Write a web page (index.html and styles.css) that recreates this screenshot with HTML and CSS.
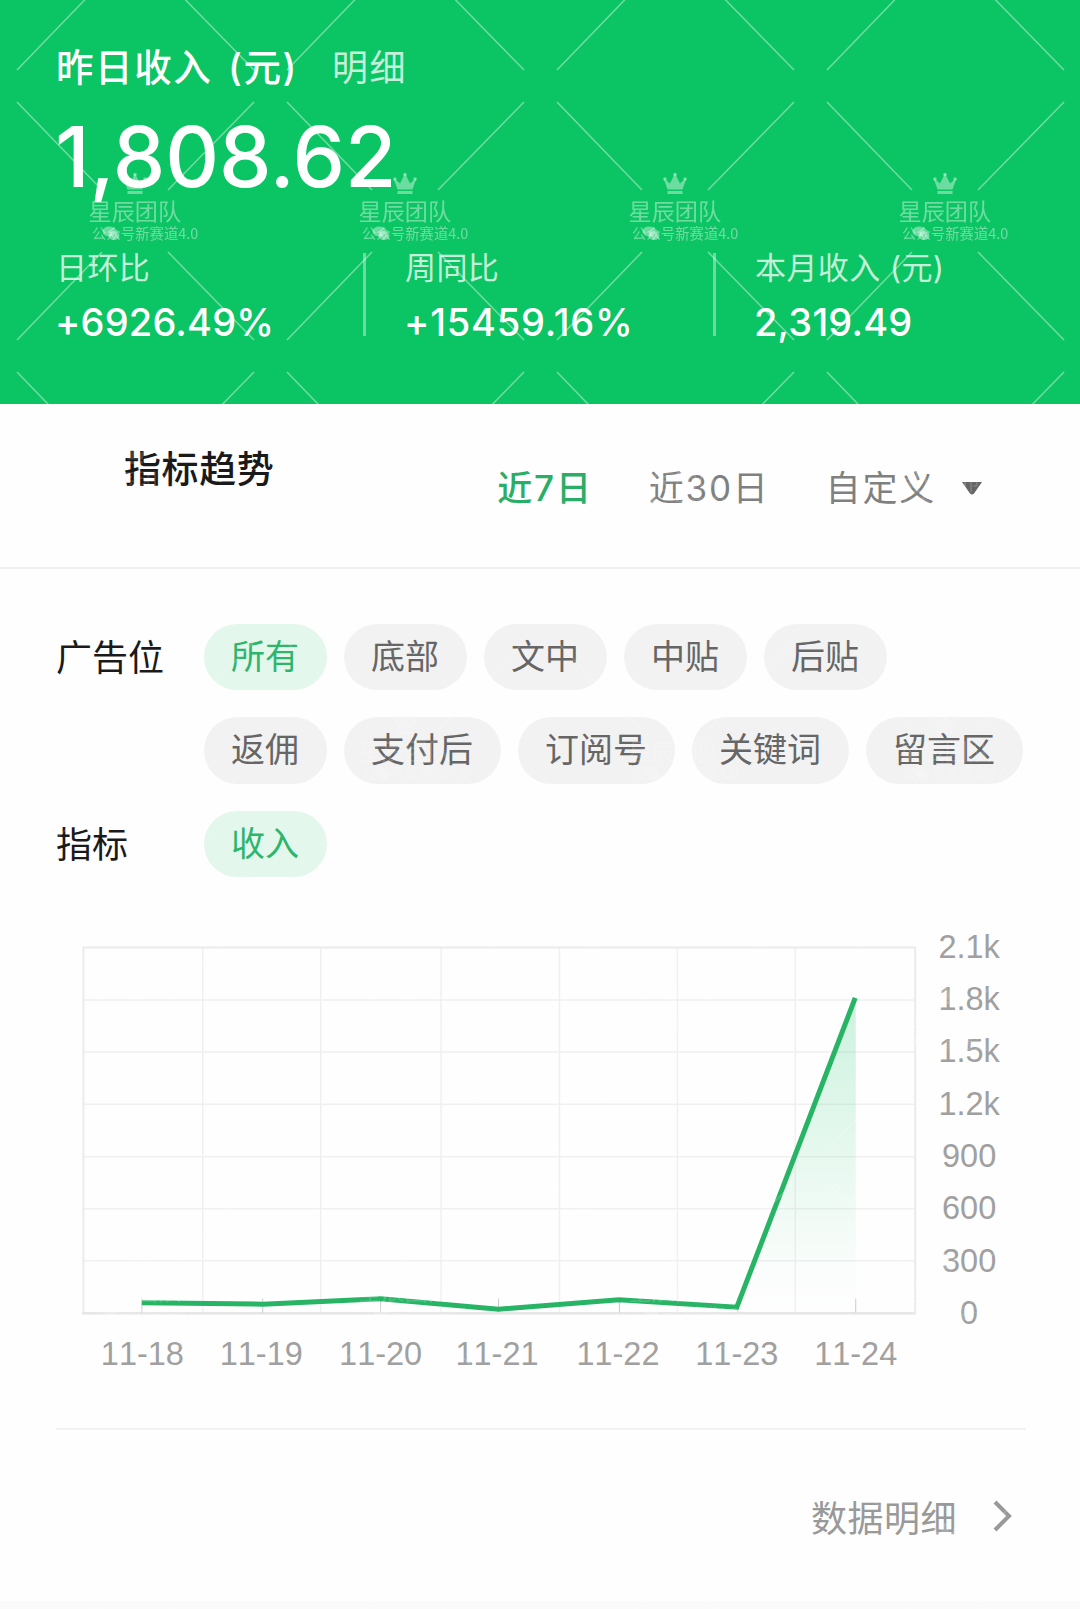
FILE: index.html
```html
<!DOCTYPE html>
<html lang="zh-CN">
<head>
    <meta charset="UTF-8">
    <meta name="viewport" content="width=device-width, initial-scale=1.0">
    <title>指标趋势</title>
    <link rel="stylesheet" href="styles.css">
</head>
<body>
    <div class="page">
        <div class="income">
            <div class="income-title">
                <h1>昨日收入 (元)</h1>
                <a class="income-link">明细</a>
            </div>
            <div class="income-total">1,808.62</div>
            <div class="stats">
                <div class="stat stat-day">
                    <div class="stat-label">日环比</div>
                    <div class="stat-value">+6926.49%</div>
                </div>
                <div class="stat stat-week">
                    <div class="stat-label">周同比</div>
                    <div class="stat-value">+15459.16%</div>
                </div>
                <div class="stat stat-month">
                    <div class="stat-label">本月收入 (元)</div>
                    <div class="stat-value">2,319.49</div>
                </div>
            </div>
        </div>

        <div class="trend-head">
            <h2>指标趋势</h2>
            <div class="tabs">
                <span class="tab active">近7日</span>
                <span class="tab">近30日</span>
                <span class="tab">自定义</span>
                <svg class="caret" width="20" height="13" viewBox="0 0 20 13"><path d="M0 0h20l-8 11.500q-2 2-4 0z" fill="#666"/></svg>
            </div>
        </div>

        <div class="filters">
            <div class="filter">
                <div class="filter-name">广告位</div>
                <div class="chips">
                    <span class="chip active">所有</span>
                    <span class="chip">底部</span>
                    <span class="chip">文中</span>
                    <span class="chip">中贴</span>
                    <span class="chip">后贴</span>
                    <span class="chip">返佣</span>
                    <span class="chip">支付后</span>
                    <span class="chip">订阅号</span>
                    <span class="chip">关键词</span>
                    <span class="chip">留言区</span>
                </div>
            </div>
            <div class="filter">
                <div class="filter-name">指标</div>
                <div class="chips">
                    <span class="chip active">收入</span>
                </div>
            </div>
        </div>

        <svg class="chart" width="1080" height="460" viewBox="0 920 1080 460">
            <defs>
                <linearGradient id="area" x1="0" y1="997" x2="0" y2="1312" gradientUnits="userSpaceOnUse">
                    <stop offset="0" stop-color="#07c160" stop-opacity="0.2"/>
                    <stop offset="0.85" stop-color="#07c160" stop-opacity="0.02"/>
                    <stop offset="1" stop-color="#07c160" stop-opacity="0"/>
                </linearGradient>
            </defs>
            <path class="grid" d="M83 999H915M83 1051H915M83 1103.500H915M83 1156H915M83 1208H915M83 1260H915M202.500 947V1312M320.500 947V1312M441 947V1312M559.500 947V1312M677.500 947V1312M795.500 947V1312"/>
            <rect class="frame" x="83" y="946.500" width="832.500" height="366"/>
            <path class="axis" d="M82 1312.500H916.500"/>
            <path class="tick" d="M141.500 1298V1312M262.500 1298V1312M380.500 1298V1312M498.500 1298V1312M619.500 1298V1312M738 1298V1312M856 1298V1312"/>
            <path d="M738 1306L856 997V1312H738z" fill="url(#area)"/>
            <polyline class="line" points="141.500,1302 262.500,1303.500 380.500,1298 498.500,1308.500 619,1299 737,1306.500 855.500,997"/>
            <g class="labels">
                <text x="969.500" y="957">2.1k</text>
                <text x="969.500" y="1009">1.8k</text>
                <text x="969.500" y="1061.500">1.5k</text>
                <text x="969.500" y="1114">1.2k</text>
                <text x="969.500" y="1166">900</text>
                <text x="969.500" y="1218.500">600</text>
                <text x="969.500" y="1271">300</text>
                <text x="969.500" y="1323">0</text>
                <text x="142" y="1364">11-18</text>
                <text x="261" y="1364">11-19</text>
                <text x="380.500" y="1364">11-20</text>
                <text x="497" y="1364">11-21</text>
                <text x="618" y="1364">11-22</text>
                <text x="737" y="1364">11-23</text>
                <text x="856" y="1364">11-24</text>
            </g>
        </svg>

        <div class="more">
            <span>数据明细</span>
            <svg width="19" height="32" viewBox="0 0 19 32"><path d="M2 2l14 14L2 30" fill="none" stroke="#999" stroke-width="4"/></svg>
        </div>
        <div class="page-end"></div>

        <!-- watermark, repeats every 270px, fainter below the green header -->
        <svg class="watermark" width="1080" height="1609">
            <defs>
                <pattern id="mark" y="87" width="270" height="270" patternUnits="userSpaceOnUse">
                    <path d="M17 15L102 103M254 15L168 103M102 165L17 253M168 165L254 253" stroke="#fff" stroke-opacity="0.4" stroke-width="1.600"/>
                    <g class="mark-icon">
                        <path d="M127.500 102.500l-4-11.500 6.500 5.500 5-10 5 10 6.500-5.500-4 11.500zM127.500 104h15v3h-15z"/>
                        <circle cx="135" cy="87.500" r="1.800"/>
                        <circle cx="125" cy="92" r="1.800"/>
                        <circle cx="145" cy="92" r="1.800"/>
                        <ellipse cx="109" cy="144.500" rx="6.500" ry="5"/>
                        <ellipse cx="114" cy="148.500" rx="5.500" ry="4.500"/>
                    </g>
                    <text class="mark-name" x="88.500" y="133">星辰团队</text>
                    <text class="mark-sub" x="92" y="152">公众号新赛道4.0</text>
                </pattern>
            </defs>
            <rect width="1080" height="404" fill="url(#mark)"/>
            <rect y="404" width="1080" height="1205" fill="url(#mark)" opacity="0.4"/>
        </svg>
    </div>
</body>
</html>
```
FILE: styles.css
```css
* {
    box-sizing: border-box;
}
body {
    margin: 0;
    background-color: #fefefe;
    font-family: Inter, "Noto Sans CJK SC", sans-serif;
    color: #1a1a1a;
}
.page {
    position: relative;
    display: flex;
    flex-direction: column;
    width: 1080px;
    height: 1609px;
    overflow: hidden;
}
h1, h2 {
    margin: 0;
    font-weight: 500;
}
.income {
    height: 404px;
    padding: 40px 56px 0;
    background-color: #0bc463;
    color: #fff;
}
.income-title {
    display: flex;
    gap: 34px;
    height: 54px;
    line-height: 55px;
}
.income-title h1 {
    font-size: 37.5px;
    letter-spacing: 1.6px;
    word-spacing: 4px;
}
.income-link {
    padding-top: 1px;
    font-size: 36px;
    letter-spacing: 1.5px;
    color: rgba(255, 255, 255, 0.75);
}
.income-total {
    height: 153px;
    margin-left: -1px;
    line-height: 126px;
    font-size: 83.5px;
    font-weight: 500;
    letter-spacing: -0.1px;
}
.stats {
    display: flex;
}
.stat {
    height: 94px;
}
.stat-day {
    width: 349px;
}
.stat-week {
    width: 350px;
}
.stat-week, .stat-month {
    position: relative;
}
.stat-week::before, .stat-month::before {
    content: "";
    position: absolute;
    left: -42px;
    top: 6px;
    width: 3px;
    height: 83px;
    background-color: rgba(255, 255, 255, 0.4);
}
.stat-label {
    height: 42px;
    line-height: 41px;
    font-size: 31px;
    letter-spacing: 0.4px;
    color: rgba(255, 255, 255, 0.75);
}
.stat-value {
    height: 66px;
    margin-left: -1px;
    line-height: 67px;
    font-size: 38px;
    font-weight: 500;
    letter-spacing: 0.2px;
}
.stat-week .stat-value {
    letter-spacing: 0.8px;
}
.trend-head {
    display: flex;
    justify-content: space-between;
    height: 165px;
    padding: 35px 98px 0 124px;
    border-bottom: 2px solid #f0f0f0;
}
.trend-head h2 {
    height: 60px;
    line-height: 61px;
    font-size: 37px;
    letter-spacing: 0.6px;
}
.tabs {
    display: flex;
    height: 98px;
    line-height: 98px;
    font-size: 35px;
    letter-spacing: 1.8px;
    color: #808080;
}
.tab {
    margin-right: 56px;
}
.tab.active {
    color: #2aae67;
    font-weight: 500;
}
.tab:nth-child(3) {
    margin-right: 26px;
}
.caret {
    margin-top: 43px;
}
.filters {
    padding: 55px 54px 0 56px;
}
.filter {
    display: flex;
    margin-bottom: 27px;
}
.filter-name {
    width: 147.5px;
    line-height: 69px;
    font-size: 36px;
}
.chips {
    flex: 1;
    display: flex;
    flex-wrap: wrap;
    gap: 27px 17px;
}
.chip {
    height: 66.5px;
    padding: 0 27.5px;
    border-radius: 34px;
    background-color: #f2f2f2;
    line-height: 66px;
    font-size: 34px;
    color: #666;
}
.chip.active {
    background-color: #e3f7ec;
    color: #2eb56c;
}
.chart {
    display: block;
    margin-top: 14px;
}
.grid, .frame, .axis, .tick {
    fill: none;
    stroke: #f0f0f0;
    stroke-width: 1.5;
}
.frame {
    stroke: #ebebeb;
    stroke-width: 2;
}
.axis {
    stroke: #e6e6e6;
    stroke-width: 2.5;
}
.tick {
    stroke: #ccc;
    stroke-width: 1;
}
.line {
    fill: none;
    stroke: #28b465;
    stroke-width: 5;
}
.labels {
    font-family: "Liberation Sans", Arial, sans-serif;
    font-size: 32.5px;
    font-kerning: none;
    fill: #a0a0a0;
    text-anchor: middle;
}
.more {
    display: flex;
    justify-content: flex-end;
    align-items: center;
    gap: 36px;
    margin: 48px 54px 0 56px;
    padding: 0 14px 0 0;
    height: 173px;
    border-top: 2px solid #f2f2f2;
    font-size: 36px;
    letter-spacing: 0.5px;
    color: #999;
}
.page-end {
    height: 8px;
    margin-top: auto;
    background-color: #fafafa;
}
.watermark {
    position: absolute;
    left: 0;
    top: 0;
    pointer-events: none;
}
.mark-icon {
    fill: #fff;
    fill-opacity: 0.4;
}
.mark-name, .mark-sub {
    font-family: "Noto Sans CJK SC", sans-serif;
    fill: #fff;
    fill-opacity: 0.4;
}
.mark-name {
    font-size: 23.2px;
}
.mark-sub {
    font-size: 14.4px;
}
```
